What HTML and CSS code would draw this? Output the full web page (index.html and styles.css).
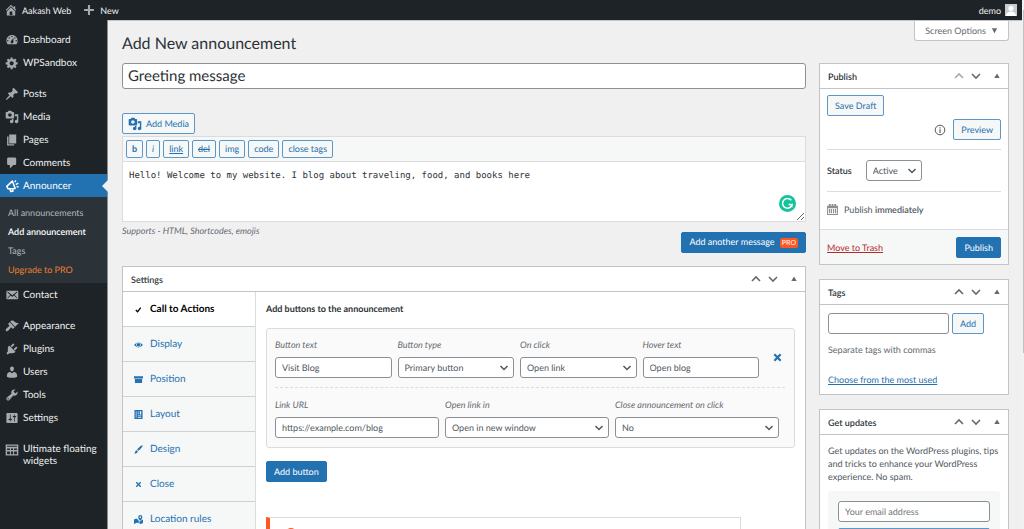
FILE: index.html
```html
<!DOCTYPE html>
<html lang="en">
<head>
    <meta charset="UTF-8">
    <meta name="viewport" content="width=device-width, initial-scale=1.0">
    <title>Add New announcement</title>
    <link rel="stylesheet" href="styles.css">
</head>
<body>
    <svg class="sprite" aria-hidden="true">
        <symbol id="media" viewBox="0 0 20 20"><path d="M13 11V4c0-.55-.45-1-1-1h-1.67L9 1H5L3.67 3H2c-.55 0-1 .45-1 1v7c0 .55.45 1 1 1h10c.55 0 1-.45 1-1zM7 4.5c1.38 0 2.5 1.12 2.5 2.5S8.38 9.5 7 9.5 4.5 8.38 4.5 7 5.62 4.5 7 4.5zM14 6h5v10.5c0 1.38-1.12 2.5-2.5 2.5S14 17.88 14 16.5s1.12-2.5 2.5-2.5c.17 0 .34.02.5.05V9h-3V6zm-4 8.05V13h2v3.5c0 1.38-1.12 2.5-2.5 2.5S7 17.88 7 16.5 8.12 14 9.5 14c.17 0 .34.02.5.05z"/></symbol>
        <symbol id="up" viewBox="0 0 12 12"><path d="M2 8l4-4 4 4" fill="none" stroke="currentColor" stroke-width="1.6"/></symbol>
        <symbol id="down" viewBox="0 0 12 12"><path d="M2 4l4 4 4-4" fill="none" stroke="currentColor" stroke-width="1.6"/></symbol>
        <symbol id="toggle" viewBox="0 0 12 12"><path d="M6 3.5L8.7 8H3.3z"/></symbol>
    </svg>

    <div class="page">
        <header class="adminbar">
            <a href="#" class="bar-item">
                <svg class="icon" viewBox="0 0 20 20"><path d="M16 8.5l1.53 1.53-1.06 1.06L10 4.6l-6.47 6.49-1.06-1.06L10 2.5l4 4v-2h2v4zm-6-2.46l6 5.99V18H4v-5.97zM12 17v-5H8v5h4z"/></svg>
                Aakash Web
            </a>
            <a href="#" class="bar-item">
                <svg class="icon" viewBox="0 0 20 20"><path d="M17 8.500v3h-5.500v5.500h-3v-5.500H3v-3h5.500V3h3v5.500z"/></svg>
                New
            </a>
            <a href="#" class="bar-item bar-user">
                demo
                <svg class="avatar" viewBox="0 0 12 12"><rect width="12" height="12" fill="#c9cbcd"/><circle cx="6" cy="4.300" r="2.600" fill="#fff"/><path d="M1 12c0-3 2-4.500 5-4.500s5 1.500 5 4.500z" fill="#fff"/></svg>
            </a>
        </header>

        <div class="wrap">
            <nav class="sidebar">
                <a href="#" class="menu-item"><svg class="icon" viewBox="0 0 20 20"><path fill-rule="evenodd" d="M3.760 16h12.480c1.100-1.370 1.760-3.110 1.760-5 0-4.420-3.580-8-8-8s-8 3.580-8 8c0 1.890.66 3.630 1.760 5zM10 4c.55 0 1 .45 1 1s-.45 1-1 1-1-.45-1-1 .45-1 1-1zM6 6c.55 0 1 .45 1 1s-.45 1-1 1-1-.45-1-1 .45-1 1-1zm8 0c.55 0 1 .45 1 1s-.45 1-1 1-1-.45-1-1 .45-1 1-1zm-5.370 5.550L12 7v6c0 1.100-.9 2-2 2s-2-.9-2-2c0-.57.24-1.080.63-1.450zM4 10c.55 0 1 .45 1 1s-.45 1-1 1-1-.45-1-1 .45-1 1-1zm12 0c.55 0 1 .45 1 1s-.45 1-1 1-1-.45-1-1 .45-1 1-1z"/></svg>Dashboard</a>
                <a href="#" class="menu-item"><svg class="icon" viewBox="0 0 20 20"><path d="M18 12h-2.180c-.17.7-.44 1.350-.81 1.930l1.540 1.540-2.100 2.100-1.540-1.540c-.58.36-1.230.63-1.910.79V19H8v-2.180c-.68-.16-1.330-.43-1.910-.79l-1.540 1.540-2.120-2.120 1.540-1.540c-.36-.58-.63-1.230-.79-1.910H1V9.030h2.170c.16-.7.44-1.350.8-1.940L2.430 5.550l2.100-2.100 1.540 1.540c.58-.37 1.240-.64 1.930-.81V2h3v2.180c.68.16 1.330.43 1.910.79l1.540-1.540 2.120 2.120-1.540 1.540c.36.59.64 1.240.8 1.940H18V12zm-8.500 1.500c1.660 0 3-1.340 3-3s-1.340-3-3-3-3 1.340-3 3 1.340 3 3 3z"/></svg>WPSandbox</a>

                <a href="#" class="menu-item group-start"><svg class="icon" viewBox="0 0 20 20"><path d="M10.440 3.020l1.820-1.820 6.360 6.350-1.830 1.820c-1.050-.68-2.480-.57-3.410.36l-.75.75c-.92.93-1.040 2.350-.35 3.410l-1.830 1.820-2.410-2.410-2.800 2.790c-.42.42-3.380 2.710-3.800 2.290s1.860-3.390 2.280-3.810l2.790-2.790L4.100 9.360l1.830-1.820c1.050.69 2.480.57 3.400-.36l.75-.75c.93-.92 1.050-2.350.36-3.410z"/></svg>Posts</a>
                <a href="#" class="menu-item"><svg class="icon"><use href="#media"/></svg>Media</a>
                <a href="#" class="menu-item"><svg class="icon" viewBox="0 0 20 20"><path d="M6 15V2h10v13H6zm-1 1h8v2H3V5h2v11z"/></svg>Pages</a>
                <a href="#" class="menu-item"><svg class="icon" viewBox="0 0 20 20"><path d="M5 2h9c1.100 0 2 .9 2 2v7c0 1.100-.9 2-2 2h-2l-5 5v-5H5c-1.100 0-2-.9-2-2V4c0-1.100.9-2 2-2z"/></svg>Comments</a>
                <a href="#" class="menu-item current"><svg class="icon" viewBox="0 0 20 20"><path d="M2.500 10.500L10.500 3l4 10.500-10 .5zM7 14.500l1.500 3.500 3-.8-.8-3" fill="none" stroke="currentColor" stroke-width="2.200" stroke-linejoin="round"/><path d="M14 4.500L15.500 2M15.500 8l3.500-2M16.500 11l3 .3" fill="none" stroke="currentColor" stroke-width="2"/></svg>Announcer</a>
                <div class="submenu">
                    <a href="#">All announcements</a>
                    <a href="#" class="active">Add announcement</a>
                    <a href="#">Tags</a>
                    <a href="#" class="upgrade">Upgrade to PRO</a>
                </div>
                <a href="#" class="menu-item"><svg class="icon" viewBox="0 0 20 20"><path d="M19 14.500v-9c0-.83-.67-1.500-1.500-1.500H3.490c-.83 0-1.500.67-1.500 1.500v9c0 .83.67 1.500 1.500 1.500H17.500c.83 0 1.500-.67 1.500-1.500zm-1.310-9.110c.33.33.15.67-.03.84L13.600 9.950l3.900 4.060c.12.14.2.36.06.51-.13.16-.43.15-.56.05l-4.370-3.730-2.140 1.950-2.130-1.950-4.370 3.730c-.13.1-.43.11-.56-.05-.14-.15-.06-.37.06-.51l3.900-4.060-4.060-3.720c-.18-.17-.36-.51-.03-.84s.67-.17.95.07l6.240 5.040 6.250-5.040c.28-.24.62-.4.95-.07z"/></svg>Contact</a>

                <a href="#" class="menu-item group-start"><svg class="icon" viewBox="0 0 20 20"><path d="M14.480 11.060L7.410 3.990l1.500-1.500c.5-.56 2.300-.47 3.510.32 1.210.8 1.430 1.280 2.910 2.100 1.180.64 2.450 1.260 4.450.85zm-.71.71L6.700 4.700 4.930 6.470c-.39.39-.39 1.020 0 1.410l1.060 1.060c.39.39.39 1.030 0 1.420-.6.6-1.430 1.110-2.210 1.690-.35.26-.7.53-1.010.84C1.430 14.230.4 16.080 1.400 17.070c.99 1 2.840-.03 4.180-1.360.31-.31.58-.66.85-1.020.57-.78 1.080-1.610 1.690-2.210.39-.39 1.020-.39 1.410 0l1.060 1.060c.39.39 1.020.39 1.410 0z"/></svg>Appearance</a>
                <a href="#" class="menu-item"><svg class="icon" viewBox="0 0 20 20"><path d="M13.110 4.360L9.870 7.600 8 5.730l3.240-3.240c.35-.34 1.050-.2 1.560.32.52.51.66 1.210.31 1.550zm-8 1.770l.91-1.120 9.010 9.010-1.190.84c-.71.71-2.630 1.160-3.820 1.160H6.140L4.900 17.260c-.59.59-1.540.59-2.120 0-.59-.58-.59-1.530 0-2.120l1.240-1.240v-3.880c0-1.130.4-3.190 1.090-3.890zm7.260 3.970l3.240-3.240c.34-.35 1.040-.21 1.550.31.52.51.66 1.210.31 1.550l-3.240 3.250z"/></svg>Plugins</a>
                <a href="#" class="menu-item"><svg class="icon" viewBox="0 0 20 20"><path d="M10 9.250c-2.270 0-2.730-3.440-2.730-3.440C7 4.020 7.820 2 9.970 2c2.160 0 2.980 2.020 2.710 3.810 0 0-.41 3.440-2.680 3.440zm0 2.570L12.720 10c2.390 0 4.520 2.330 4.520 4.530v2.490s-3.650 1.130-7.240 1.130c-3.650 0-7.240-1.130-7.240-1.130v-2.490c0-2.250 1.940-4.480 4.470-4.480z"/></svg>Users</a>
                <a href="#" class="menu-item"><svg class="icon" viewBox="0 0 20 20"><path d="M16.680 9.770c-1.340 1.340-3.300 1.670-4.950.99l-5.410 6.520c-.99.99-2.590.99-3.580 0s-.99-2.590 0-3.570l6.520-5.420c-.68-1.650-.35-3.610.99-4.950 1.280-1.280 3.120-1.620 4.720-1.060l-2.890 2.890 2.820 2.820 2.860-2.870c.53 1.580.18 3.390-1.080 4.650zM3.810 16.210c.4.39 1.040.39 1.430 0 .4-.4.4-1.040 0-1.430-.39-.4-1.030-.4-1.430 0-.39.39-.39 1.030 0 1.430z"/></svg>Tools</a>
                <a href="#" class="menu-item"><svg class="icon" viewBox="0 0 20 20"><path d="M18 16V4c0-.55-.45-1-1-1H3c-.55 0-1 .45-1 1v12c0 .55.45 1 1 1h14c.55 0 1-.45 1-1zM8 11h1c.55 0 1 .45 1 1s-.45 1-1 1H8v1.500c0 .28-.22.5-.5.5s-.5-.22-.5-.5V13H6c-.55 0-1-.45-1-1s.45-1 1-1h1V5.500c0-.28.22-.5.5-.5s.5.22.5.5V11zm5-2h-1c-.55 0-1-.45-1-1s.45-1 1-1h1V5.500c0-.28.22-.5.5-.5s.5.22.5.5V7h1c.55 0 1 .45 1 1s-.45 1-1 1h-1v5.500c0 .28-.22.5-.5.5s-.5-.22-.5-.5V9z"/></svg>Settings</a>

                <a href="#" class="menu-item group-start two-line"><svg class="icon" viewBox="0 0 20 20"><path fill-rule="evenodd" d="M1 2h18v16H1zM3 4v1.500h14V4zM3 8v2h4V8zM8.500 8v2h3V8zM13 8v2h4V8zM3 12v4h4v-4zM8.500 12v4h3v-4zM13 12v4h4v-4z"/></svg>Ultimate floating widgets</a>
            </nav>

            <main class="content">
                <div class="top-row">
                    <h1>Add New announcement</h1>
                    <button type="button" class="screen-options">Screen Options <svg class="caret" viewBox="0 0 8 8"><path d="M1 1.500h6L4 7z"/></svg></button>
                </div>

                <div class="columns">
                    <div class="primary">
                        <input type="text" class="title-input" value="Greeting message" aria-label="Title">

                        <button type="button" class="btn add-media"><svg class="icon"><use href="#media"/></svg>Add Media</button>

                        <div class="editor">
                            <div class="quicktags">
                                <button type="button" class="tag-btn"><b>b</b></button>
                                <button type="button" class="tag-btn"><i>i</i></button>
                                <button type="button" class="tag-btn"><u>link</u></button>
                                <button type="button" class="tag-btn"><del>del</del></button>
                                <button type="button" class="tag-btn">img</button>
                                <button type="button" class="tag-btn">code</button>
                                <button type="button" class="tag-btn">close tags</button>
                            </div>
                            <textarea class="editor-text" aria-label="Message">Hello! Welcome to my website. I blog about traveling, food, and books here</textarea>
                            <svg class="grammar" viewBox="0 0 16 16"><circle cx="8" cy="8" r="8" fill="#15c39a"/><path d="M11.600 5A4.600 4.600 0 1 0 12.400 9H9" fill="none" stroke="#fff" stroke-width="1.400"/><path d="M12.600 8.500v3.500l-2-1.600z" fill="#fff"/></svg>
                        </div>
                        <div class="editor-foot">
                            <p class="hint">Supports - HTML, Shortcodes, emojis</p>
                            <button type="button" class="btn btn-primary add-message">Add another message <span class="pro">PRO</span></button>
                        </div>

                        <section class="postbox settings">
                            <div class="box-head">
                                <h2>Settings</h2>
                                <button type="button" class="handle" aria-label="Move up"><svg><use href="#up"/></svg></button>
                                <button type="button" class="handle" aria-label="Move down"><svg><use href="#down"/></svg></button>
                                <button type="button" class="handle handle-toggle" aria-label="Toggle panel"><svg><use href="#toggle"/></svg></button>
                            </div>
                            <div class="settings-body">
                                <nav class="tabs">
                                    <a href="#" class="tab tab-active"><svg viewBox="0 0 10 10"><path d="M2 5.500l2 2L7.500 3" fill="none" stroke="currentColor" stroke-width="1.400"/></svg>Call to Actions</a>
                                    <a href="#" class="tab"><svg viewBox="0 0 10 10"><path d="M0 5.500Q5-.500 10 5.500 5 11 0 5.500z"/><circle cx="5" cy="5.200" r="2.600" fill="#f6f7f7"/><circle cx="5" cy="5.200" r="1.900"/></svg>Display</a>
                                    <a href="#" class="tab"><svg viewBox="0 0 10 10"><path d="M0 1.500h10V4H0zM1 4.500h8V9H1z"/></svg>Position</a>
                                    <a href="#" class="tab"><svg viewBox="0 0 10 10"><path fill-rule="evenodd" d="M.5 0h9v10h-9zM2 1.500v7h.7v-7zM4.300 1.500V5H5V1.500zM6.500 1.500V5H8V1.500zM4.300 6.200V7H8v-.8zM4.300 8v.8H8V8z"/></svg>Layout</a>
                                    <a href="#" class="tab"><svg viewBox="0 0 10 10"><path d="M9.500.5c.8.800-3.500 5.500-4.800 6L3.500 5.300C4.200 4 8.700-.300 9.500.5zM3 5.900L4.200 7C4 9 2 9.800.3 9.500 1.500 8.500 1 6.500 3 5.900z"/></svg>Design</a>
                                    <a href="#" class="tab"><svg viewBox="0 0 10 10"><path d="M2.500 2.500l5 5m0-5l-5 5" fill="none" stroke="currentColor" stroke-width="1.500"/></svg>Close</a>
                                    <a href="#" class="tab"><svg viewBox="0 0 10 10"><path d="M0 5l2.500-1L5 5.500 5.500 9 3 8.500 0 10zM6 7h1l1-1 2-1v4L7.500 10 6 9.500z"/><path fill-rule="evenodd" d="M7 0a2.300 2.300 0 0 1 2.300 2.400C9.300 4 7 6.500 7 6.500S4.700 4 4.700 2.400A2.300 2.300 0 0 1 7 0zM7 1.500a.9.900 0 1 0 .010 0z"/></svg>Location rules</a>
                                </nav>
                                <div class="panel">
                                    <h3>Add buttons to the announcement</h3>
                                    <div class="cta">
                                        <div class="cta-row">
                                            <div class="field"><label for="btn-text">Button text</label><input type="text" id="btn-text" value="Visit Blog"></div>
                                            <div class="field"><label for="btn-type">Button type</label><select id="btn-type"><option>Primary button</option></select></div>
                                            <div class="field"><label for="on-click">On click</label><select id="on-click"><option>Open link</option></select></div>
                                            <div class="field"><label for="hover">Hover text</label><input type="text" id="hover" value="Open blog"></div>
                                            <button type="button" class="remove" aria-label="Remove button"><svg viewBox="0 0 10 10"><path d="M1.500 1.500l7 7m0-7l-7 7" fill="none" stroke="currentColor" stroke-width="2.400"/></svg></button>
                                        </div>
                                        <div class="cta-row cta-second">
                                            <div class="field"><label for="url">Link URL</label><input type="text" id="url" value="https://example.com/blog"></div>
                                            <div class="field"><label for="target">Open link in</label><select id="target"><option>Open in new window</option></select></div>
                                            <div class="field"><label for="close">Close announcement on click</label><select id="close"><option>No</option></select></div>
                                        </div>
                                    </div>
                                    <button type="button" class="btn btn-primary">Add button</button>
                                    <div class="notice"><svg viewBox="0 0 12 12"><circle cx="6" cy="6" r="6"/></svg></div>
                                </div>
                            </div>
                        </section>
                    </div>

                    <aside class="secondary">
                        <section class="postbox">
                            <div class="box-head">
                                <h2>Publish</h2>
                                <button type="button" class="handle dim" aria-label="Move up"><svg><use href="#up"/></svg></button>
                                <button type="button" class="handle" aria-label="Move down"><svg><use href="#down"/></svg></button>
                                <button type="button" class="handle handle-toggle" aria-label="Toggle panel"><svg><use href="#toggle"/></svg></button>
                            </div>
                            <div class="publish">
                                <button type="button" class="btn">Save Draft</button>
                                <div class="preview-row">
                                    <svg class="info" viewBox="0 0 12 12"><circle cx="6" cy="6" r="4.800" fill="none" stroke="currentColor"/><path d="M5.500 5.300h1.100V9H5.500zM5.500 3.200h1.100v1.200H5.500z"/></svg>
                                    <button type="button" class="btn">Preview</button>
                                </div>
                                <div class="status-row">
                                    <label for="status">Status</label>
                                    <select id="status"><option>Active</option></select>
                                </div>
                                <div class="when">
                                    <svg viewBox="0 0 12 12"><path fill-rule="evenodd" d="M0 2h2V0h2v2h1V0h2v2h1V0h2v2h2v10H0zM1 4.500V11h10V4.500zM2 5.500h1.500v4.700H2zM4.300 5.500h1.200v4.700H4.300zM6.500 5.500h1.200v4.700H6.500zM8.600 5.500h1.500v4.700H8.600z"/></svg>
                                    <span>Publish <b>immediately</b></span>
                                </div>
                            </div>
                            <div class="publish-foot">
                                <a href="#" class="trash">Move to Trash</a>
                                <button type="button" class="btn btn-primary">Publish</button>
                            </div>
                        </section>

                        <section class="postbox">
                            <div class="box-head">
                                <h2>Tags</h2>
                                <button type="button" class="handle" aria-label="Move up"><svg><use href="#up"/></svg></button>
                                <button type="button" class="handle" aria-label="Move down"><svg><use href="#down"/></svg></button>
                                <button type="button" class="handle handle-toggle" aria-label="Toggle panel"><svg><use href="#toggle"/></svg></button>
                            </div>
                            <div class="tags">
                                <div class="tag-row">
                                    <input type="text" aria-label="Add tag">
                                    <button type="button" class="btn">Add</button>
                                </div>
                                <p>Separate tags with commas</p>
                                <a href="#">Choose from the most used</a>
                            </div>
                        </section>

                        <section class="postbox">
                            <div class="box-head">
                                <h2>Get updates</h2>
                                <button type="button" class="handle" aria-label="Move up"><svg><use href="#up"/></svg></button>
                                <button type="button" class="handle" aria-label="Move down"><svg><use href="#down"/></svg></button>
                                <button type="button" class="handle handle-toggle" aria-label="Toggle panel"><svg><use href="#toggle"/></svg></button>
                            </div>
                            <div class="updates">
                                <p>Get updates on the WordPress plugins, tips and tricks to enhance your WordPress experience. No spam.</p>
                                <form class="subscribe">
                                    <input type="email" placeholder="Your email address" aria-label="Your email address">
                                    <button type="button" class="btn" aria-label="Subscribe"></button>
                                </form>
                            </div>
                        </section>
                    </aside>
                </div>
            </main>
        </div>
    </div>
    <div class="scroll-track"><div class="scroll-thumb"></div></div>
</body>
</html>
```
FILE: styles.css
```css
* {
    box-sizing: border-box;
}
body {
    margin: 0;
    display: flex;
    height: 100vh;
    overflow: hidden;
    background-color: #f0f0f1;
    color: #50575e;
    font-family: Lato, "Open Sans", sans-serif;
    font-size: 9px;
    line-height: 13px;
    text-rendering: geometricPrecision;
}
h1, h2, h3, p {
    margin: 0;
}
svg {
    display: block;
    flex: none;
    fill: currentColor;
}
button, input, select, textarea {
    font: inherit;
    color: inherit;
    text-rendering: inherit;
}
.sprite {
    position: absolute;
    width: 0;
    height: 0;
}
.icon {
    width: 14px;
    height: 14px;
}
.page {
    flex: 1;
    display: flex;
    flex-direction: column;
    min-width: 0;
}

/* admin bar */
.adminbar {
    display: flex;
    flex: none;
    align-items: center;
    gap: 11px;
    height: 20px;
    padding: 0 5px 0 4px;
    background-color: #1d2327;
}
.bar-item {
    display: flex;
    align-items: center;
    gap: 4px;
    color: #f0f0f1;
    text-decoration: none;
}
.bar-item .icon {
    color: #a7aaad;
}
.bar-user {
    margin-left: auto;
}
.avatar {
    width: 12px;
    height: 12px;
}
.wrap {
    display: flex;
    flex: 1;
    min-height: 0;
}

/* sidebar */
.sidebar {
    flex: none;
    width: 108px;
    padding-top: 8px;
    background-color: #1d2327;
    border-right: 1px solid #8c8f92;
}
.menu-item {
    position: relative;
    display: flex;
    align-items: center;
    gap: 4px;
    height: 23px;
    padding-left: 5px;
    color: #f0f0f1;
    font-size: 10px;
    line-height: 12px;
    text-decoration: none;
}
.menu-item .icon {
    color: #a7aaad;
}
.group-start {
    margin-top: 8px;
}
.two-line {
    height: auto;
    padding-top: 6px;
    align-items: flex-start;
}
.menu-item.current {
    background-color: #2271b1;
    color: #fff;
}
.menu-item.current .icon {
    color: #fff;
}
.menu-item.current::after {
    content: "";
    position: absolute;
    right: -1px;
    top: 6px;
    border: 6px solid transparent;
    border-left: 0;
    border-right-color: #f0f0f1;
}
.submenu {
    padding: 6px 0 4px;
    background-color: #2c3338;
}
.submenu a {
    display: block;
    padding-left: 8px;
    line-height: 19px;
    color: #b4b8bc;
    text-decoration: none;
}
.submenu .active {
    color: #fff;
    font-weight: 600;
}
.submenu .upgrade {
    color: #f27d2c;
}

/* content */
.content {
    flex: 1;
    min-width: 0;
    padding: 0 13px 0 14px;
    border-top: 1px solid #c3c4c7;
}
.top-row {
    display: flex;
    justify-content: space-between;
    align-items: flex-start;
    height: 42px;
}
h1 {
    padding-top: 12px;
    color: #2c3338;
    font-size: 16px;
    font-weight: 400;
    line-height: 22px;
}
.screen-options {
    display: flex;
    align-items: center;
    gap: 5px;
    height: 20px;
    padding: 0 10px;
    background-color: #fff;
    border: 1px solid #c3c4c7;
    border-top: 0;
    border-radius: 0 0 3px 3px;
    color: #646970;
}
.caret {
    width: 7px;
    height: 7px;
}
.columns {
    display: flex;
    gap: 13px;
}
.primary {
    display: flex;
    flex-direction: column;
    flex: 1;
    min-width: 0;
}
.secondary {
    flex: none;
    width: 190px;
}

/* form controls */
input, select {
    height: 21px;
    width: 100%;
    padding: 0 6px;
    background-color: #fff;
    border: 1px solid #8c8f94;
    border-radius: 3px;
}
select {
    appearance: none;
    background-image: url("data:image/svg+xml,%3Csvg xmlns='http://www.w3.org/2000/svg' viewBox='0 0 10 10'%3E%3Cpath d='M1.500 3l3.500 3.500L8.500 3' fill='none' stroke='%2350575e' stroke-width='1.500'/%3E%3C/svg%3E");
    background-repeat: no-repeat;
    background-position: right 4px center;
    background-size: 10px 10px;
}
.btn {
    height: 21px;
    padding: 0 7px;
    background-color: #f6f7f7;
    border: 1px solid #5b97c8;
    border-radius: 2px;
    color: #2271b1;
    white-space: nowrap;
}
.btn-primary {
    background-color: #2271b1;
    border-color: #2271b1;
    color: #fff;
}
.title-input {
    height: 26px;
    margin-bottom: 24px;
    padding: 0 5px;
    color: #2c3338;
    font-size: 15px;
}
.add-media {
    display: flex;
    align-items: center;
    align-self: flex-start;
    gap: 4px;
    padding: 0 5px;
}

/* editor */
.editor {
    position: relative;
    margin-top: 2px;
    border: 1px solid #dcdcde;
}
.quicktags {
    display: flex;
    gap: 3px;
    padding: 3px;
    background-color: #f6f7f7;
    border-bottom: 1px solid #dcdcde;
}
.tag-btn {
    height: 18px;
    padding: 0 5px;
    background-color: #f6f7f7;
    border: 1px solid #5b97c8;
    border-radius: 2px;
    color: #2271b1;
    line-height: 12px;
}
.editor-text {
    display: block;
    width: 100%;
    height: 59px;
    padding: 8px 6px;
    border: 0;
    color: #2c3338;
    font-family: "DejaVu Sans Mono", monospace;
    resize: vertical;
}
.grammar {
    position: absolute;
    right: 9px;
    bottom: 9px;
    width: 17px;
    height: 17px;
}
.editor-foot {
    display: flex;
    justify-content: space-between;
    align-items: flex-start;
    margin-bottom: 13px;
}
.hint {
    margin-top: 2px;
    color: #646970;
    font-style: italic;
}
.add-message {
    margin-top: 10px;
}
.pro {
    margin-left: 3px;
    padding: 1px 2px;
    background-color: #ff5722;
    border-radius: 2px;
    font-size: 7px;
}

/* boxes */
.postbox {
    margin-bottom: 14px;
    background-color: #fff;
    border: 1px solid #c3c4c7;
}
.box-head {
    display: flex;
    align-items: center;
    height: 25px;
    padding: 0 3px 0 8px;
    border-bottom: 1px solid #c3c4c7;
}
.box-head h2 {
    flex: 1;
    color: #2c3338;
    font-size: 9px;
    font-weight: 600;
}
.handle {
    width: 17px;
    padding: 0 3px;
    background: none;
    border: 0;
    color: #646970;
}
.handle svg {
    width: 12px;
    height: 12px;
}
.handle-toggle {
    margin-left: 4px;
}
.dim {
    color: #a7aaad;
}

/* settings */
.settings-body {
    display: flex;
}
.tabs {
    flex: none;
    width: 133px;
    background-color: #f6f7f7;
    border-right: 1px solid #dcdcde;
}
.tab {
    display: flex;
    align-items: center;
    gap: 7px;
    height: 35px;
    padding-left: 11px;
    border-bottom: 1px solid #d0d1d4;
    color: #2271b1;
    font-size: 10px;
    text-decoration: none;
}
.tab svg {
    width: 9px;
    height: 9px;
}
.tab-active {
    background-color: #fff;
    color: #000;
    font-weight: 700;
}
.panel {
    flex: 1;
    min-width: 0;
    padding: 10px;
}
.panel h3 {
    margin-bottom: 13px;
    color: #2c3338;
    font-size: 9px;
    font-weight: 700;
}
.cta {
    margin-bottom: 13px;
    padding: 9px 9px 9px 8px;
    background-color: #fafafa;
    border: 1px solid #dcdcde;
    border-radius: 3px;
}
.cta-row {
    display: flex;
    gap: 6px;
}
.cta-second {
    margin-top: 9px;
    padding: 10px 6px 0 0;
    border-top: 1px dashed #dcdcde;
}
.field {
    flex: 1;
    min-width: 0;
}
.field label {
    display: block;
    margin-bottom: 6px;
    color: #646970;
    font-style: italic;
}
.remove {
    width: 20px;
    padding: 0 0 2px 8px;
    background: none;
    border: 0;
    color: #2271b1;
}
.remove svg {
    width: 9px;
    height: 9px;
}
.notice {
    margin: 35px 54px 0 0;
    padding: 10px 15px;
    border: 1px solid #dcdcde;
    border-left: 4px solid #ff5722;
    color: #ff5722;
}
.notice svg {
    width: 12px;
    height: 12px;
}

/* publish box */
.publish {
    padding: 6px 7px 13px;
}
.preview-row {
    display: flex;
    justify-content: flex-end;
    align-items: center;
    gap: 7px;
    margin-top: 3px;
    padding-bottom: 9px;
    border-bottom: 1px solid #dcdcde;
}
.info {
    width: 12px;
    height: 12px;
}
.status-row {
    display: flex;
    align-items: center;
    gap: 14px;
    padding: 10px 0;
    border-bottom: 1px solid #dcdcde;
}
.status-row label {
    color: #2c3338;
    font-weight: 600;
}
.status-row select {
    width: 56px;
}
.when {
    display: flex;
    align-items: center;
    gap: 6px;
    margin-top: 11px;
}
.when svg {
    width: 11px;
    height: 11px;
    color: #8c8f94;
}
.when b {
    font-weight: 600;
}
.publish-foot {
    display: flex;
    justify-content: space-between;
    align-items: center;
    height: 35px;
    padding: 0 7px;
    background-color: #f6f7f7;
    border-top: 1px solid #dcdcde;
}
.trash {
    color: #b32d2e;
}

/* tags and updates */
.tags {
    padding: 8px 8px 8px;
}
.tag-row {
    display: flex;
    gap: 3px;
    margin-bottom: 9px;
    padding-right: 16px;
}
.tags p {
    margin-bottom: 17px;
    color: #646970;
}
.tags a {
    color: #2271b1;
}
.updates {
    padding: 9px 8px;
}
.subscribe {
    display: flex;
    flex-direction: column;
    gap: 6px;
    margin-top: 8px;
    padding: 10px;
    background-color: #f6f7f7;
    border-radius: 3px;
}
.subscribe .btn {
    background-color: #2271b1;
}

/* scroll strip */
.scroll-track {
    flex: none;
    width: 2px;
    padding-top: 10px;
    background-color: #f1f1f1;
}
.scroll-thumb {
    height: 66%;
    border-right: 1px solid #c1c1c1;
}
```
